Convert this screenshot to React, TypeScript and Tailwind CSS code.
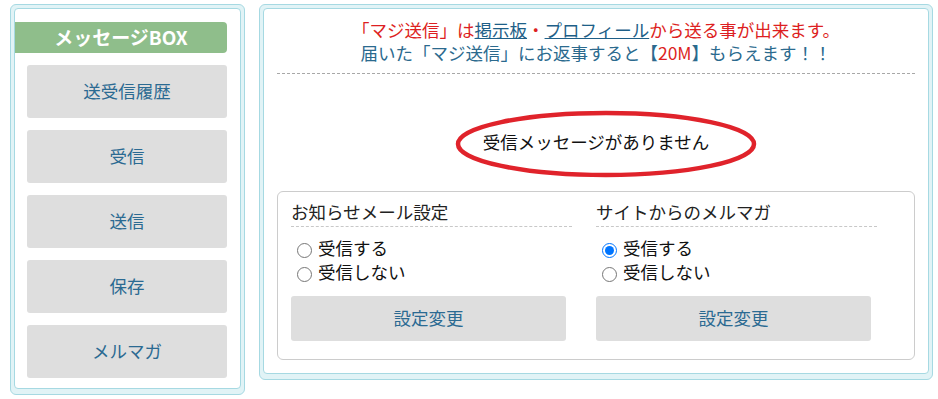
import React from "react";

const font = { fontFamily: '"Noto Sans CJK JP", "Noto Sans", sans-serif' };

const menu = ["送受信履歴", "受信", "送信", "保存", "メルマガ"];

function Frame({ className, children }: { className?: string; children: React.ReactNode }) {
  return (
    <div className={`rounded-[6px] border border-[#a6d9e2] bg-[#e1f3f6] p-[3px] pb-[5px] ${className ?? ""}`}>
      <div className="h-full rounded-[4px] border border-[#a6d9e2] bg-white">{children}</div>
    </div>
  );
}

function SettingColumn({ title, name, checked }: { title: string; name: string; checked?: "on" | "off" }) {
  return (
    <div className="w-[281px]">
      <div className="border-b border-dashed border-[#c8c8c8] pb-[3px] text-[17.5px] leading-[22px] text-[#222]">{title}</div>
      <div className="mt-[9px] flex flex-col text-[17.5px] leading-[24px] text-[#111]">
        <label className="flex items-center">
          <input type="radio" name={name} defaultChecked={checked === "on"} className="ml-[6px] mr-[6px] mt-[4px] h-[15px] w-[15px]" />
          受信する
        </label>
        <label className="flex items-center">
          <input type="radio" name={name} defaultChecked={checked === "off"} className="ml-[6px] mr-[6px] mt-[4px] h-[15px] w-[15px]" />
          受信しない
        </label>
      </div>
      <button className="mt-[12px] h-[45px] w-[275px] rounded-[3px] bg-[#dedede] text-[17.5px] text-[#2b6a92]">設定変更</button>
    </div>
  );
}

export default function App() {
  return (
    <div className="flex items-start gap-[14px] bg-white pl-[10px] pt-[4px]" style={font}>
      {/* left: message box menu */}
      <Frame className="w-[235px] h-[391px]">
        <div className="pt-[13px]">
          <div className="flex h-[31px] w-[212px] items-center justify-center rounded-r-[4px] bg-[#8fbe8b] text-[19px] font-bold text-white">
            メッセージBOX
          </div>
          <div className="ml-[12px] mt-[12px] flex flex-col gap-[12px]">
            {menu.map((m) => (
              <button key={m} className="h-[53px] w-[200px] rounded-[3px] bg-[#dedede] text-[17.5px] text-[#2b6a92]">
                {m}
              </button>
            ))}
          </div>
        </div>
      </Frame>

      {/* right: main */}
      <Frame className="w-[674px] h-[376px]">
        <div className="px-[13px] pt-[9px]">
          <div className="text-center text-[17.5px] leading-[23px]">
            <div className="text-[#dd1f22]">
              「マジ送信」は<span className="text-[#1e5f88] underline">掲示板</span>・
              <span className="text-[#1e5f88] underline">プロフィール</span>から送る事が出来ます。
            </div>
            <div className="text-[#2b6a8e]">
              届いた「マジ送信」にお返事すると【<span className="text-[#dd1f22]">20M</span>】もらえます！！
            </div>
          </div>
          <div className="mt-[9px] border-t border-dashed border-[#a8a8a8]" />

          <div className="relative flex h-[117px] justify-center pt-[56px]">
            <span className="text-[17.5px] leading-[24px] text-[#111]">受信メッセージがありません</span>
            <svg className="absolute left-[177px] top-[36px]" width="304" height="70" viewBox="0 0 304 70">
              <ellipse cx="152" cy="34" rx="148" ry="31" fill="none" stroke="#e0232b" strokeWidth="4.5" />
            </svg>
          </div>

          <div className="flex gap-[24px] rounded-[6px] border border-[#cccccc] pb-[18px] pl-[13px] pt-[9px]">
            <SettingColumn title="お知らせメール設定" name="notice" />
            <SettingColumn title="サイトからのメルマガ" name="mag" checked="on" />
          </div>
        </div>
      </Frame>
    </div>
  );
}
